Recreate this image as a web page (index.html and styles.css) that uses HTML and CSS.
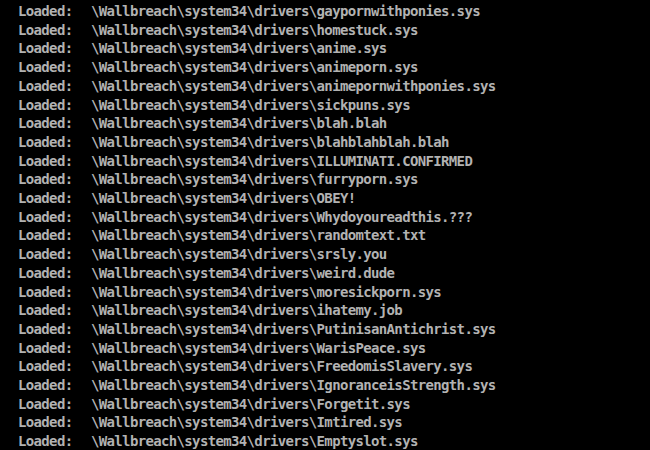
FILE: index.html
```html
<!DOCTYPE html>
<html lang="en">
<head>
    <meta charset="UTF-8">
    <title>Boot log</title>
    <link rel="stylesheet" href="styles.css">
</head>
<body>
    <!-- Console -->
    <div class="console">
        <div class="line"><span class="label">Loaded:</span><span class="path">\Wallbreach\system34\drivers\gaypornwithponies.sys</span></div>
        <div class="line"><span class="label">Loaded:</span><span class="path">\Wallbreach\system34\drivers\homestuck.sys</span></div>
        <div class="line"><span class="label">Loaded:</span><span class="path">\Wallbreach\system34\drivers\anime.sys</span></div>
        <div class="line"><span class="label">Loaded:</span><span class="path">\Wallbreach\system34\drivers\animeporn.sys</span></div>
        <div class="line"><span class="label">Loaded:</span><span class="path">\Wallbreach\system34\drivers\animepornwithponies.sys</span></div>
        <div class="line"><span class="label">Loaded:</span><span class="path">\Wallbreach\system34\drivers\sickpuns.sys</span></div>
        <div class="line"><span class="label">Loaded:</span><span class="path">\Wallbreach\system34\drivers\blah.blah</span></div>
        <div class="line"><span class="label">Loaded:</span><span class="path">\Wallbreach\system34\drivers\blahblahblah.blah</span></div>
        <div class="line"><span class="label">Loaded:</span><span class="path">\Wallbreach\system34\drivers\ILLUMINATI.CONFIRMED</span></div>
        <div class="line"><span class="label">Loaded:</span><span class="path">\Wallbreach\system34\drivers\furryporn.sys</span></div>
        <div class="line"><span class="label">Loaded:</span><span class="path">\Wallbreach\system34\drivers\OBEY!</span></div>
        <div class="line"><span class="label">Loaded:</span><span class="path">\Wallbreach\system34\drivers\Whydoyoureadthis.???</span></div>
        <div class="line"><span class="label">Loaded:</span><span class="path">\Wallbreach\system34\drivers\randomtext.txt</span></div>
        <div class="line"><span class="label">Loaded:</span><span class="path">\Wallbreach\system34\drivers\srsly.you</span></div>
        <div class="line"><span class="label">Loaded:</span><span class="path">\Wallbreach\system34\drivers\weird.dude</span></div>
        <div class="line"><span class="label">Loaded:</span><span class="path">\Wallbreach\system34\drivers\moresickporn.sys</span></div>
        <div class="line"><span class="label">Loaded:</span><span class="path">\Wallbreach\system34\drivers\ihatemy.job</span></div>
        <div class="line"><span class="label">Loaded:</span><span class="path">\Wallbreach\system34\drivers\PutinisanAntichrist.sys</span></div>
        <div class="line"><span class="label">Loaded:</span><span class="path">\Wallbreach\system34\drivers\WarisPeace.sys</span></div>
        <div class="line"><span class="label">Loaded:</span><span class="path">\Wallbreach\system34\drivers\FreedomisSlavery.sys</span></div>
        <div class="line"><span class="label">Loaded:</span><span class="path">\Wallbreach\system34\drivers\IgnoranceisStrength.sys</span></div>
        <div class="line"><span class="label">Loaded:</span><span class="path">\Wallbreach\system34\drivers\Forgetit.sys</span></div>
        <div class="line"><span class="label">Loaded:</span><span class="path">\Wallbreach\system34\drivers\Imtired.sys</span></div>
        <div class="line"><span class="label">Loaded:</span><span class="path">\Wallbreach\system34\drivers\Emptyslot.sys</span></div>
    </div>
</body>
</html>
```

FILE: styles.css
```css
body {
    margin: 0;
    padding: 0;
    background-color: #000;
    color: #b2b2b2;
    font-family: "DejaVu Sans Mono", "Liberation Mono", monospace;
    overflow: hidden;
}

/* Consola */
.console {
    padding: 2px 0 0 18px;
    font-size: 14px;
    font-weight: bold;
    letter-spacing: -0.65px;
    line-height: 18.7px;
}

.line {
    display: flex;
    white-space: pre;
}

.label {
    width: 73px;
}
```
